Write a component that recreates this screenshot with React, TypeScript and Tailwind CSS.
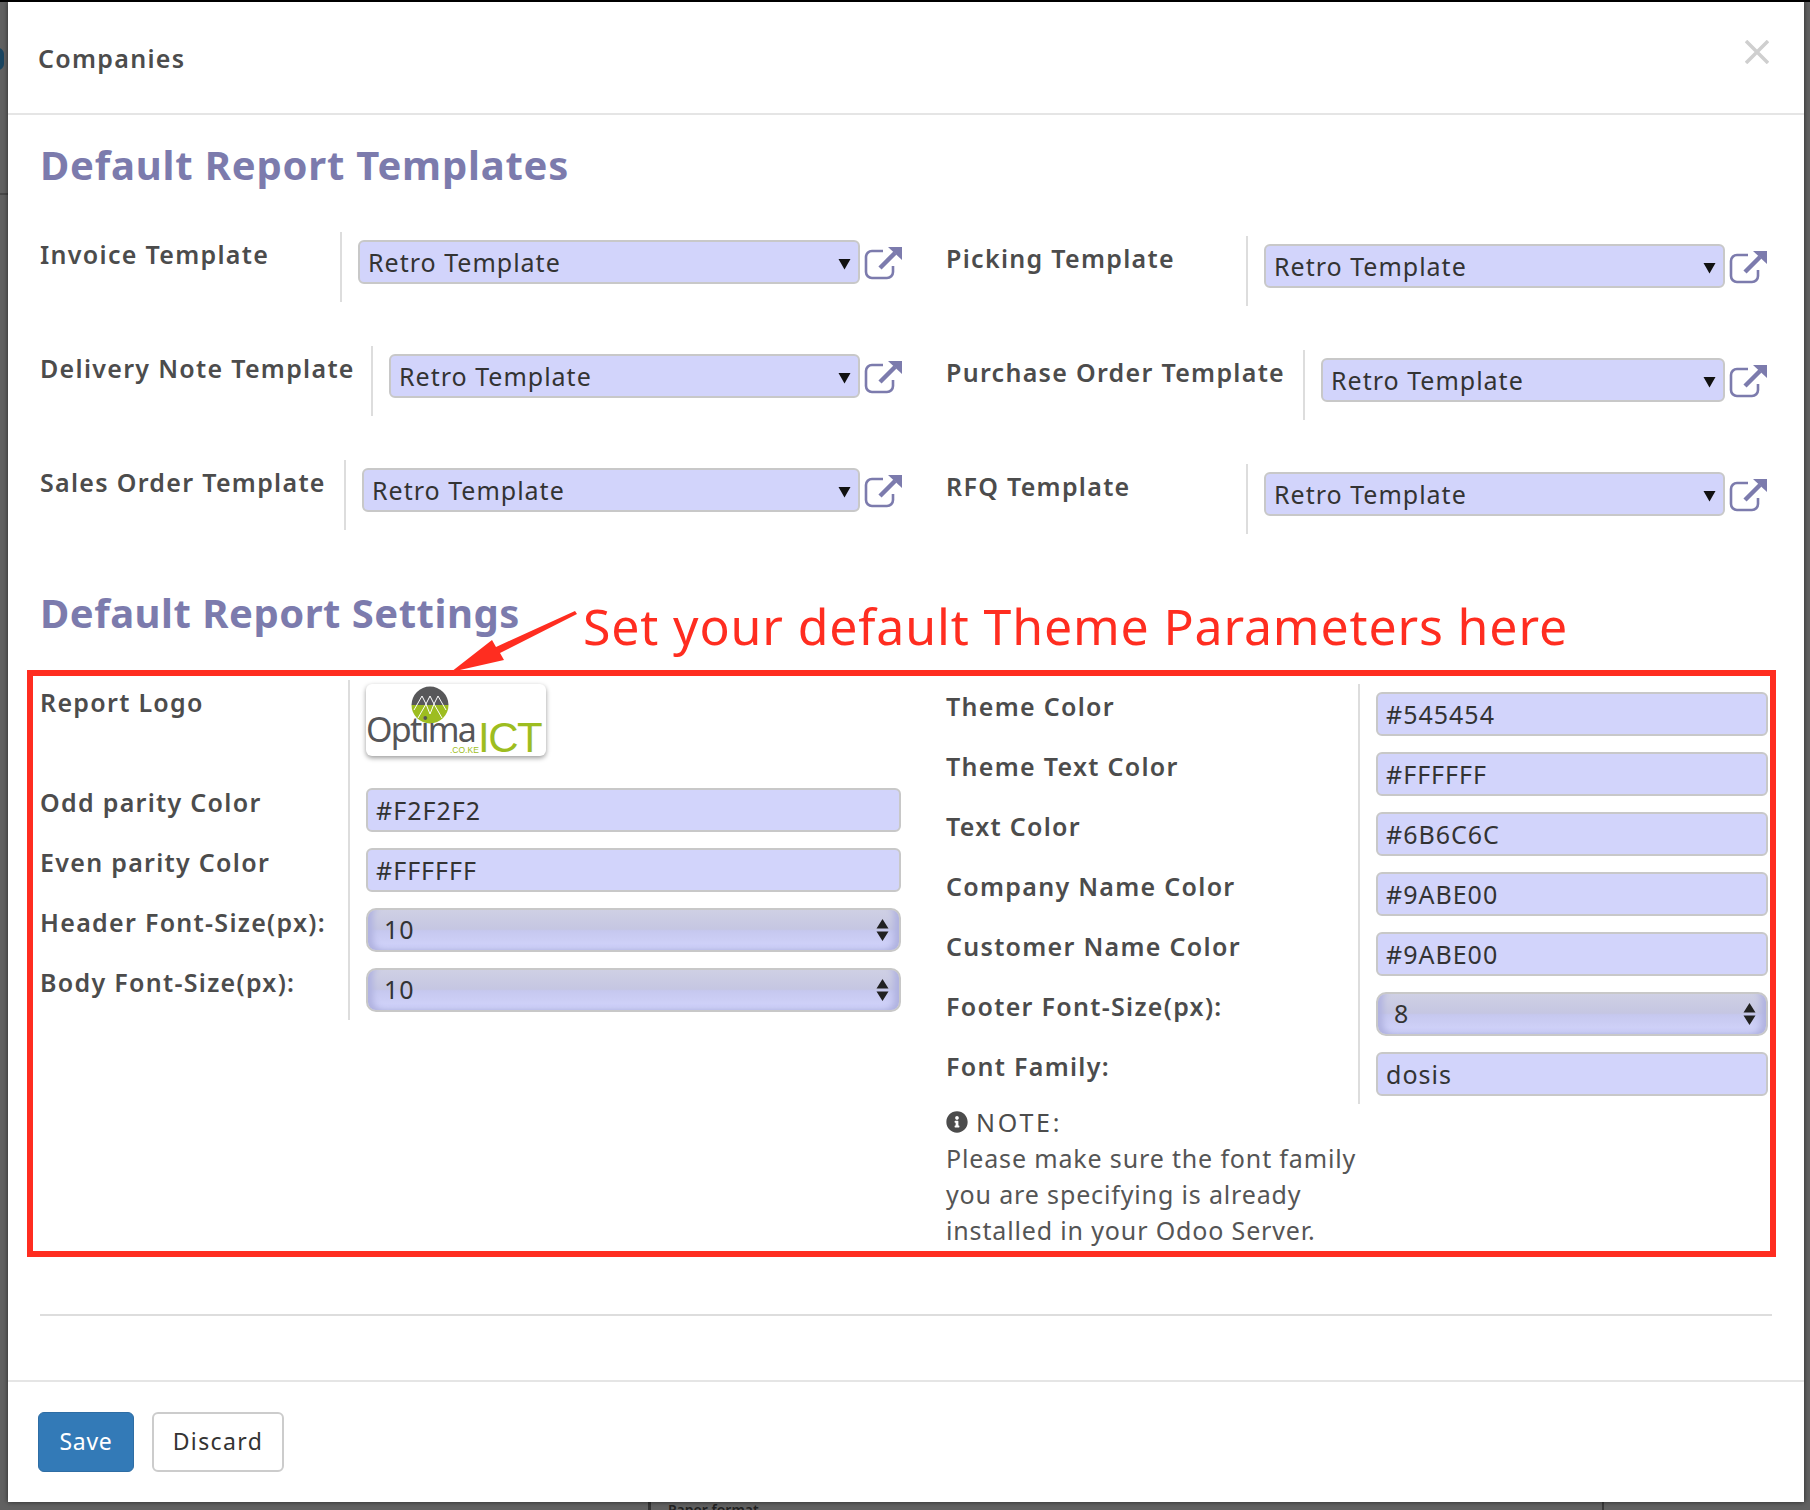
import React from "react";
import { FaInfoCircle } from "react-icons/fa";

const font = "font-['Noto_Sans',sans-serif]";

function LinkIcon() {
  return (
    <svg width="38" height="34" viewBox="0 0 38 34" className="ml-[4px] mt-[6px] shrink-0">
      <path d="M19 5H8a6 6 0 0 0-6 6V26a6 6 0 0 0 6 6H23a6 6 0 0 0 6-6V20" fill="none" stroke="#7C7BAD" strokeWidth="2.6" />
      <path d="M16 22L31 7" fill="none" stroke="#7C7BAD" strokeWidth="4.5" />
      <path d="M24 1H38V14Z" fill="#7C7BAD" />
    </svg>
  );
}

function TemplateRow({ label, w }: { label: string; w: string }) {
  return (
    <div className="flex h-[70px] mb-[44px]">
      <div className={`${w} shrink-0 pt-[5px] leading-[34px] text-[25px] font-semibold text-[#4c4c4c] tracking-[1.3px] whitespace-nowrap`}>{label}</div>
      <div className="flex flex-1 border-l-2 border-[#dddddd] pl-[16px] pt-[8px] items-start">
        <div className="flex flex-1 h-[44px] items-center justify-between rounded-[6px] border-2 border-[#c8c8c8] bg-[#d2d4fb] pl-[8px] pr-[7px] pt-[2px] text-[25px] text-[#333] tracking-[1px]">
          <span>Retro Template</span>
          <svg width="13" height="13" viewBox="0 0 13 13"><path d="M0.5 2H12.5L6.5 12.5Z" fill="#111" /></svg>
        </div>
        <LinkIcon />
      </div>
    </div>
  );
}

function Label({ text, w }: { text: string; w: string }) {
  return <div className={`${w} shrink-0 pt-[5px] leading-[34px] text-[25px] font-semibold text-[#4c4c4c] tracking-[1.3px] whitespace-nowrap`}>{text}</div>;
}

function TextField({ value }: { value: string }) {
  return (
    <div className="flex h-[44px] items-center rounded-[6px] border-2 border-[#c8c8c8] bg-[#d2d4fb] pl-[8px] pt-[2px] text-[25px] text-[#333] tracking-[1px]">
      {value}
    </div>
  );
}

function SelectField({ value }: { value: string }) {
  return (
    <div className="flex h-[44px] items-center justify-between rounded-[10px] border-2 border-[#c8c8c8] bg-[linear-gradient(180deg,#cfd0e4_0%,#c5c6e2_48%,#c6c8ef_52%,#d2d4fb_100%)] shadow-[inset_9px_-3px_6px_-4px_#b0b2e0,inset_-9px_-3px_6px_-4px_#b0b2e0] pl-[16px] pr-[10px] text-[25px] text-[#333] tracking-[1px]">
      <span>{value}</span>
      <svg width="13" height="24" viewBox="0 0 13 24"><path d="M6.5 1L12.5 10.5H0.5Z M0.5 13.5H12.5L6.5 23Z" fill="#222" /></svg>
    </div>
  );
}

function SettingRow({ label, lw, cell, children }: { label: string; lw: string; cell?: string; children: React.ReactNode }) {
  return (
    <div className={`flex ${cell ?? "h-[60px]"}`}>
      <Label text={label} w={lw} />
      <div className="flex-1 border-l-2 border-[#dddddd] pl-[16px]">{children}</div>
    </div>
  );
}

function Logo() {
  return (
    <div className="mt-[4px] w-[180px] h-[72px] rounded-[6px] bg-white shadow-[0_2px_5px_rgba(0,0,0,0.4)]">
      <svg width="180" height="72" viewBox="0 0 180 72">
        <defs>
          <clipPath id="c"><circle cx="64" cy="21" r="18.5" /></clipPath>
        </defs>
        <g clipPath="url(#c)">
          <rect x="44" y="2" width="40" height="19" fill="#58585a" />
          <rect x="44" y="21" width="40" height="20" fill="#9dbd20" />
          <path d="M48 26L56 12L60 20L64 12L68 20L72 12L80 26M52 34L60 20L64 30L68 20L76 34" fill="none" stroke="#fff" strokeWidth="1" />
        </g>
        <text x="0" y="58" fontFamily="'Noto Sans',sans-serif" fontSize="34" fill="#555558" letterSpacing="-1.7">Optima</text>
        <text x="112" y="68" fontFamily="'Liberation Sans',sans-serif" fontSize="42" fill="#9dbd20" letterSpacing="-1.5">ICT</text>
        <text x="84" y="69" fontFamily="'Liberation Sans',sans-serif" fontSize="8.5" fill="#9dbd20">.CO.KE</text>
      </svg>
    </div>
  );
}

export default function App() {
  return (
    <div className={`${font} relative w-[1810px] h-[1510px] overflow-hidden bg-[#616161] border-t-2 border-black pl-[8px]`}>
      <div className="absolute -left-[8px] top-[46px] w-[12px] h-[22px] rounded-full bg-[#1a4560]" />
      <div className="absolute left-0 top-[191px] w-[8px] h-[2px] bg-[#484848]" />
      <div className="absolute left-[648px] top-[1500px] w-[3px] h-[8px] bg-[#333]" />
      <div className="absolute left-[1602px] top-[1500px] w-[2px] h-[8px] bg-[#3a3a3a]" />
      <div className="absolute left-[668px] top-[1501px] text-[14px] leading-[14px] font-semibold text-[#222]">Paper format</div>

      <div className="relative flex flex-col w-[1796px] h-[1500px] bg-white shadow-[0_0_5px_rgba(0,0,0,0.6)]">
        <div className="flex h-[113px] shrink-0 items-center justify-between border-b-2 border-[#e5e5e5] pl-[30px] pr-[35px]">
          <div className="pt-[2px] text-[25px] font-semibold text-[#4c4c4c] tracking-[1.3px]">Companies</div>
          <svg width="24" height="24" viewBox="0 0 24 24" className="mb-[12px]"><path d="M1 1L23 23M23 1L1 23" stroke="#cfcfcf" strokeWidth="3.5" /></svg>
        </div>

        <div className="relative flex-1 pl-[32px]">
          <div className="mt-[25px] h-[50px] leading-[50px] text-[40px] font-bold text-[#7C7BAD] tracking-[0.8px]">Default Report Templates</div>

          <div className="flex mt-[42px]">
            <div className="w-[862px]">
              <TemplateRow label="Invoice Template" w="w-[300px]" />
              <TemplateRow label="Delivery Note Template" w="w-[331px]" />
              <TemplateRow label="Sales Order Template" w="w-[304px]" />
            </div>
            <div className="w-[821px] ml-[44px] pt-[4px]">
              <TemplateRow label="Picking Template" w="w-[300px]" />
              <TemplateRow label="Purchase Order Template" w="w-[357px]" />
              <TemplateRow label="RFQ Template" w="w-[300px]" />
            </div>
          </div>

          <div className="mt-[10px] h-[50px] leading-[50px] text-[40px] font-bold text-[#7C7BAD] tracking-[0.5px]">Default Report Settings</div>

          <div className="relative -ml-[13px] mt-[32px] w-[1749px] h-[587px] border-[6px] border-[#ff2d20] flex">
            <div className="w-[913px] shrink-0 pl-[7px] pt-[4px]">
              <SettingRow label="Report Logo" lw="w-[308px]" cell="h-[100px]"><Logo /></SettingRow>
              {[
                ["Odd parity Color", "#F2F2F2"],
                ["Even parity Color", "#FFFFFF"],
              ].map(([l, v]) => (
                <SettingRow key={l} label={l} lw="w-[308px]">
                  <div className="w-[535px] pt-[8px]"><TextField value={v} /></div>
                </SettingRow>
              ))}
              {["Header Font-Size(px):", "Body Font-Size(px):"].map((l) => (
                <SettingRow key={l} label={l} lw="w-[308px]">
                  <div className="w-[535px] pt-[8px]"><SelectField value="10" /></div>
                </SettingRow>
              ))}
            </div>
            <div className="flex-1 pt-[8px]">
              {[
                ["Theme Color", "#545454"],
                ["Theme Text Color", "#FFFFFF"],
                ["Text Color", "#6B6C6C"],
                ["Company Name Color", "#9ABE00"],
                ["Customer Name Color", "#9ABE00"],
              ].map(([l, v]) => (
                <SettingRow key={l} label={l} lw="w-[412px]">
                  <div className="w-[392px] pt-[8px]"><TextField value={v} /></div>
                </SettingRow>
              ))}
              <SettingRow label="Footer Font-Size(px):" lw="w-[412px]">
                <div className="w-[392px] pt-[8px]"><SelectField value="8" /></div>
              </SettingRow>
              <SettingRow label="Font Family:" lw="w-[412px]">
                <div className="w-[392px] pt-[8px]"><TextField value="dosis" /></div>
              </SettingRow>
              <div className="text-[25px] leading-[36px] text-[#555] tracking-[0.85px] whitespace-nowrap">
                <div className="flex items-center gap-[8px]"><FaInfoCircle className="w-[22px] h-[22px] text-[#4c4c4c]" /><span className="tracking-[2.8px] text-[#4c4c4c]">NOTE:</span></div>
                <div>Please make sure the font family</div>
                <div>you are specifying is already</div>
                <div>installed in your Odoo Server.</div>
              </div>
            </div>
          </div>

          <div className="mt-[57px] mr-[32px] h-[2px] bg-[#dddddd]" />

          <div className="absolute left-[575px] top-[483px] h-[56px] leading-[56px] text-[50px] text-[#ff2d20] tracking-[0.85px] whitespace-nowrap">Set your default Theme Parameters here</div>
          <svg className="absolute left-[400px] top-[490px]" width="180" height="70" viewBox="0 0 180 70">
            <path d="M167 6L169 9L92 48L96 55L43 67L84 35L88 42Z" fill="#ff2d20" />
          </svg>
        </div>

        <div className="flex h-[122px] shrink-0 gap-[18px] border-t-2 border-[#e5e5e5] pl-[30px] pt-[30px]">
          <div className="flex w-[96px] h-[60px] items-center justify-center rounded-[6px] border border-[#2e6da4] bg-[#337ab7] pb-[2px] text-[23px] tracking-[0.7px] text-white">Save</div>
          <div className="flex w-[132px] h-[60px] items-center justify-center rounded-[6px] border-2 border-[#cccccc] bg-white pb-[2px] text-[23px] tracking-[1.4px] text-[#333]">Discard</div>
        </div>
      </div>
    </div>
  );
}
